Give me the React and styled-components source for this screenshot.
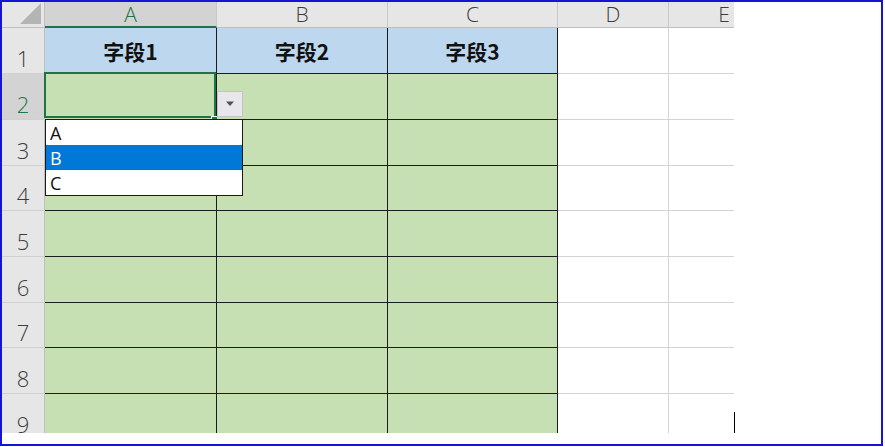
import React from "react";
import styled, { createGlobalStyle } from "styled-components";

const GlobalStyle = createGlobalStyle`
  html, body {
    margin: 0;
    padding: 0;
    background: #ffffff;
  }
  * {
    box-sizing: border-box;
  }
`;

const Frame = styled.div`
  position: relative;
  width: 883px;
  height: 446px;
  border: 2px solid #1414d2;
  background: #ffffff;
`;

const Sheet = styled.div`
  display: grid;
  grid-template-columns: 43px 172px 171px 170px 111px 111px;
  grid-template-rows: 26px 46px 46px 46px 45px 46px 46px 45px 46px 46px;
  width: 732px;
  height: 431px;
  overflow: hidden;
  font-family: "Open Sans", "Noto Sans", sans-serif;
`;

const Corner = styled.div`
  background: #e6e6e6;
  border-right: 1px solid #bfbfbf;
  border-bottom: 1px solid #bfbfbf;
`;

const ColHeader = styled.div`
  display: flex;
  align-items: center;
  justify-content: center;
  background: ${(p) => (p.$selected ? "#d3d3d3" : "#e6e6e6")};
  border-right: 1px solid #c8c8c8;
  border-bottom: ${(p) => (p.$selected ? "2px solid #217346" : "1px solid #bfbfbf")};
  color: ${(p) => (p.$selected ? "#217346" : "#3c3c3c")};
  font-size: 21px;
  font-weight: 300;
  line-height: 1;
`;

const RowHeader = styled.div`
  display: flex;
  align-items: flex-end;
  justify-content: center;
  padding-bottom: 2px;
  background: ${(p) => (p.$selected ? "#d3d3d3" : "#e6e6e6")};
  border-right: 1px solid #bfbfbf;
  border-bottom: 1px solid #d0d0d0;
  color: ${(p) => (p.$selected ? "#217346" : "#3c3c3c")};
  font-size: 22px;
  font-weight: 300;
  line-height: 1.15;
`;

const HeadCell = styled.div`
  display: flex;
  align-items: center;
  justify-content: center;
  padding-top: 2px;
  background: #bdd7ee;
  border-right: 1px solid #1c1c1c;
  border-bottom: 1px solid #1c1c1c;
  color: #111111;
  font-family: "Noto Sans CJK SC", "Noto Sans", sans-serif;
  font-size: 21px;
  font-weight: 700;
  line-height: 1.2;
`;

const DataCell = styled.div`
  position: relative;
  background: #c6e0b4;
  border-right: 1px solid #1c1c1c;
  border-bottom: 1px solid #1c1c1c;
`;

const BlankCell = styled.div`
  background: #ffffff;
  border-right: 1px solid #d4d4d4;
  border-bottom: 1px solid #d4d4d4;
`;

const Selection = styled.div`
  position: absolute;
  top: -2px;
  left: -1px;
  right: 0;
  bottom: 1px;
  border: 2px solid #217346;
  z-index: 2;
`;

const FillHandle = styled.div`
  position: absolute;
  right: -1px;
  bottom: -2px;
  width: 6px;
  height: 5px;
  background: #217346;
  border-top: 1px solid #ffffff;
  border-left: 1px solid #ffffff;
  z-index: 3;
`;

const DropButton = styled.div`
  position: absolute;
  left: 172px;
  top: 17px;
  width: 26px;
  height: 26px;
  display: flex;
  align-items: center;
  justify-content: center;
  background: #e8e8ec;
  border: 1px solid #c4c4c8;
  z-index: 4;
`;

const DropList = styled.ul`
  position: absolute;
  left: 0;
  top: 45px;
  width: 198px;
  margin: 0;
  padding: 0;
  list-style: none;
  background: #ffffff;
  border: 1px solid #1a1a1a;
  z-index: 5;
  font-family: "Open Sans", "Noto Sans", sans-serif;
`;

const Option = styled.li`
  height: 25px;
  padding-left: 4px;
  display: flex;
  align-items: center;
  font-size: 18px;
  color: ${(p) => (p.$active ? "#ffffff" : "#111111")};
  background: ${(p) => (p.$active ? "#0078d7" : "transparent")};
`;

const Caret = styled.div`
  position: absolute;
  left: 732px;
  top: 410px;
  width: 1px;
  height: 21px;
  background: #000000;
`;

const columns = ["A", "B", "C", "D", "E"];
const fields = ["字段1", "字段2", "字段3"];
const options = ["A", "B", "C"];

const Dropdown = () => (
  <>
    <Selection />
    <FillHandle />
    <DropButton>
      <svg width="10" height="6" viewBox="0 0 10 6">
        <path d="M1 0.5 L9 0.5 L5 5 Z" fill="#505050" />
      </svg>
    </DropButton>
    <DropList>
      {options.map((o) => (
        <Option key={o} $active={o === "B"}>
          {o}
        </Option>
      ))}
    </DropList>
  </>
);

const App = () => {
  const rows = [1, 2, 3, 4, 5, 6, 7, 8, 9];
  return (
    <Frame>
      <GlobalStyle />
      <Sheet>
        <Corner>
          <svg width="42" height="25" viewBox="0 0 42 25" style={{ display: "block" }}>
            <path d="M18 22 L39 22 L39 1 Z" fill="#b4b4b4" />
          </svg>
        </Corner>
        {columns.map((c) => (
          <ColHeader key={c} $selected={c === "A"}>
            {c}
          </ColHeader>
        ))}
        {rows.map((r) => (
          <React.Fragment key={r}>
            <RowHeader $selected={r === 2}>{r}</RowHeader>
            {r === 1
              ? fields.map((f) => <HeadCell key={f}>{f}</HeadCell>)
              : fields.map((f, i) => (
                  <DataCell key={f}>{r === 2 && i === 0 && <Dropdown />}</DataCell>
                ))}
            <BlankCell />
            <BlankCell />
          </React.Fragment>
        ))}
      </Sheet>
      <Caret />
    </Frame>
  );
};

export default App;
